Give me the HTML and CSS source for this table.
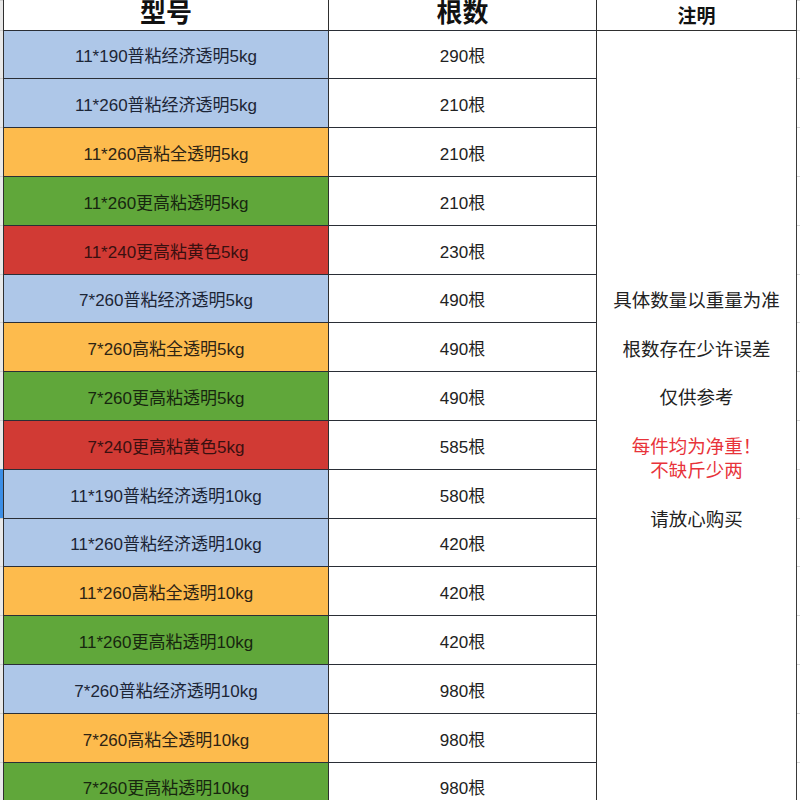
FILE: index.html
```html
<!DOCTYPE html>
<html lang="zh">
<head>
<meta charset="utf-8">
<title>型号 根数 注明</title>
<link rel="stylesheet" href="styles.css">
</head>
<body>
<div class="sheet">
  <div class="rh"></div>
  <div class="cell head head-big">型号</div>
  <div class="cell head head-big">根数</div>
  <div class="cell head head-small last">注明</div>
  <div class="gap"></div>

  <div class="note">
    <span>具体数量以重量为准</span>
    <span class="blank"></span>
    <span>根数存在少许误差</span>
    <span class="blank"></span>
    <span>仅供参考</span>
    <span class="blank"></span>
    <span class="red">每件均为净重！</span>
    <span class="red">不缺斤少两</span>
    <span class="blank"></span>
    <span>请放心购买</span>
  </div>

  <div class="rh"></div><div class="cell type blue">11*190普粘经济透明5kg</div><div class="cell num">290根</div><div class="gap"></div>
  <div class="rh"></div><div class="cell type blue">11*260普粘经济透明5kg</div><div class="cell num">210根</div><div class="gap"></div>
  <div class="rh"></div><div class="cell type orange">11*260高粘全透明5kg</div><div class="cell num">210根</div><div class="gap"></div>
  <div class="rh"></div><div class="cell type green">11*260更高粘透明5kg</div><div class="cell num">210根</div><div class="gap"></div>
  <div class="rh"></div><div class="cell type red-bg">11*240更高粘黄色5kg</div><div class="cell num">230根</div><div class="gap"></div>
  <div class="rh"></div><div class="cell type blue">7*260普粘经济透明5kg</div><div class="cell num">490根</div><div class="gap"></div>
  <div class="rh"></div><div class="cell type orange">7*260高粘全透明5kg</div><div class="cell num">490根</div><div class="gap"></div>
  <div class="rh"></div><div class="cell type green">7*260更高粘透明5kg</div><div class="cell num">490根</div><div class="gap"></div>
  <div class="rh"></div><div class="cell type red-bg">7*240更高粘黄色5kg</div><div class="cell num">585根</div><div class="gap"></div>
  <div class="rh selected"></div><div class="cell type blue">11*190普粘经济透明10kg</div><div class="cell num">580根</div><div class="gap"></div>
  <div class="rh"></div><div class="cell type blue">11*260普粘经济透明10kg</div><div class="cell num">420根</div><div class="gap"></div>
  <div class="rh"></div><div class="cell type orange">11*260高粘全透明10kg</div><div class="cell num">420根</div><div class="gap"></div>
  <div class="rh"></div><div class="cell type green">11*260更高粘透明10kg</div><div class="cell num">420根</div><div class="gap"></div>
  <div class="rh"></div><div class="cell type blue">7*260普粘经济透明10kg</div><div class="cell num">980根</div><div class="gap"></div>
  <div class="rh"></div><div class="cell type orange">7*260高粘全透明10kg</div><div class="cell num">980根</div><div class="gap"></div>
  <div class="rh"></div><div class="cell type green">7*260更高粘透明10kg</div><div class="cell num">980根</div><div class="gap"></div>
</div>
</body>
</html>
```

FILE: styles.css
```css
html, body {
  margin: 0;
  padding: 0;
  background: #ffffff;
  overflow: hidden;
}

body {
  width: 800px;
  height: 800px;
  font-family: "Liberation Sans", "Noto Sans CJK SC", sans-serif;
  color: #222222;
}

.sheet {
  display: grid;
  grid-template-columns: 3px 325px 268px 201px 1fr;
  grid-template-rows: 30px repeat(3, 48px 49px 49px 49px 49px) 48px;
}

.rh {
  background: #e9e9e9;
  border-top: 1px solid #cfcfcf;
  box-sizing: border-box;
}

.rh.selected {
  background: #3b8ee6;
  border-top-color: #3b8ee6;
}

.gap {
  border-top: 1px solid #d6d6d6;
  box-sizing: border-box;
}

.cell {
  box-sizing: border-box;
  border-left: 1px solid #2f2f2f;
  border-top: 1px solid #2a2e36;
  display: flex;
  align-items: center;
  justify-content: center;
  white-space: nowrap;
}

.cell.last {
  border-right: 1px solid #3a3a3a;
}

.head {
  border-top: none;
  align-items: flex-end;
  font-weight: 700;
  color: #111111;
  line-height: 1;
  font-family: "Noto Sans CJK SC", sans-serif;
}

.head-big {
  font-size: 26px;
  padding-bottom: 6px;
}

.head-small {
  font-size: 19px;
  padding-bottom: 6px;
}

.type {
  font-size: 17px;
  padding-top: 0;
}

.num {
  font-size: 17px;
  color: #222222;
  padding-top: 0;
}

.blue {
  background: #aec7e8;
  color: #1c2536;
}

.orange {
  background: #fdbb4d;
  color: #2e2414;
}

.green {
  background: #60a73a;
  color: #17260f;
}

.red-bg {
  background: #d13a34;
  color: #3a1010;
}

.note {
  grid-column: 4;
  grid-row: 2 / span 16;
  box-sizing: border-box;
  border-left: 1px solid #2f2f2f;
  border-right: 1px solid #3a3a3a;
  border-top: 1px solid #2f2f2f;
  display: flex;
  flex-direction: column;
  align-items: center;
  padding-top: 256px;
  font-size: 18.5px;
  line-height: 24.3px;
  color: #222222;
  font-family: "Noto Sans CJK SC", sans-serif;
}

.note span {
  display: block;
  height: 24.3px;
}

.note .red {
  color: #e8333a;
}
```
